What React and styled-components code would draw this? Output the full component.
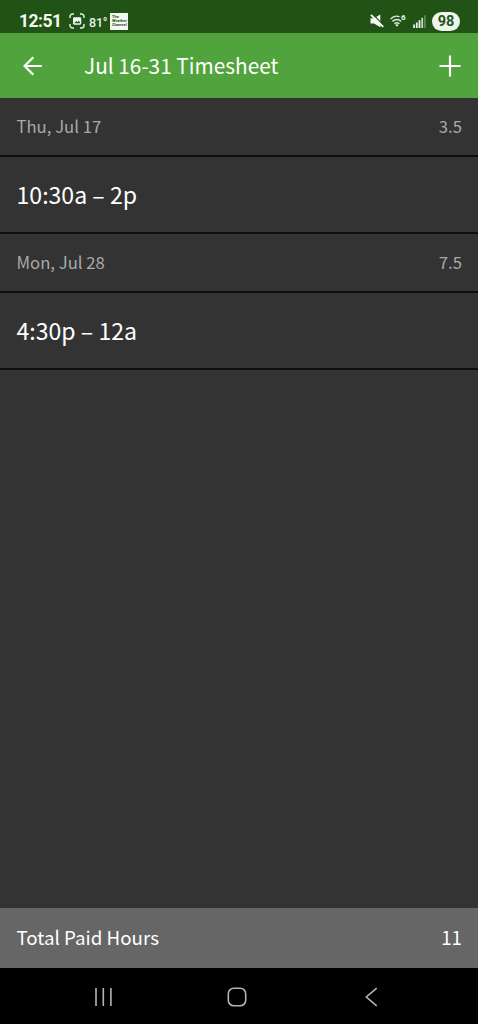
import React from "react";
import styled, { createGlobalStyle } from "styled-components";

const GlobalStyle = createGlobalStyle`
  * {
    box-sizing: border-box;
  }

  body {
    margin: 0;
    background-color: #333333;
    font-family: "Noto Sans CJK SC", "Noto Sans", sans-serif;
  }
`

const Screen = styled.div`
  display: flex;
  flex-direction: column;
  height: 100vh;
  min-height: 1024px;
  background-color: #333333;
  color: #ffffff;
`

const StatusBar = styled.div`
  display: flex;
  justify-content: space-between;
  align-items: center;
  height: 33px;
  padding: 9px 18px 0 19px;
  background-color: #215317;
  font-family: Roboto, sans-serif;
`

const StatusGroup = styled.div`
  display: flex;
  align-items: center;
  gap: ${({ $gap }) => $gap}px;
  height: 24px;
`

const Clock = styled.span`
  width: 50px;
  color: #f4faf2;
  font-size: 17.5px;
  font-weight: 700;
  letter-spacing: -0.5px;
  line-height: 24px;
`

const Temperature = styled.span`
  width: 21px;
  margin-left: 4px;
  padding-top: 2px;
  color: #e6f3e2;
  font-size: 12.5px;
  font-weight: 500;
  letter-spacing: -0.2px;
  white-space: nowrap;
`

const ChannelBadge = styled.div`
  display: flex;
  flex-direction: column;
  justify-content: center;
  width: 18px;
  height: 17px;
  padding-left: 2px;
  background-color: #f4faf2;
  color: #215317;
  font-size: 4px;
  font-weight: 700;
  line-height: 4px;
  overflow: hidden;
`

const Battery = styled.span`
  width: 28px;
  height: 19px;
  border-radius: 10px;
  background-color: #eef5ec;
  color: #215317;
  font-size: 14.5px;
  font-weight: 700;
  line-height: 19px;
  text-align: center;
`

const AppBar = styled.header`
  display: flex;
  align-items: center;
  height: 65px;
  padding: 0 17px 0 23px;
  background-color: #51a43d;
`

const Title = styled.h1`
  flex: 1;
  margin: 0 0 1px 42px;
  font-size: 20.8px;
  font-weight: 400;
  line-height: 32px;
`

const IconButton = styled.button`
  display: flex;
  padding: 0;
  border: none;
  background: none;
  color: #ffffff;
`

const EntryList = styled.main`
  flex: 1;
`

const DayRow = styled.div`
  display: flex;
  justify-content: space-between;
  align-items: center;
  height: 59px;
  padding: 0 16px 1px 16.5px;
  border-bottom: 2px solid #0e0e0e;
  color: #a9a9a9;
  font-size: 16.7px;
`

const ShiftRow = styled.div`
  display: flex;
  align-items: center;
  height: 77px;
  padding: 0 16px 2px 16.5px;
  border-bottom: 2px solid #0e0e0e;
  font-size: 23.1px;
`

const TotalBar = styled.footer`
  display: flex;
  justify-content: space-between;
  align-items: center;
  height: 60px;
  padding: 0 16px 3px 16.5px;
  background-color: #666666;
  font-size: 18.75px;
`

const NavBar = styled.nav`
  display: flex;
  justify-content: space-between;
  align-items: center;
  height: 56px;
  padding: 2px 100px 0 93px;
  background-color: #000000;
  color: #b4b4b4;
`

const HomeButton = styled.span`
  display: flex;
  margin-right: 4px;
`

const days = [
  { date: "Thu, Jul 17", hours: "3.5", shift: "10:30a – 2p" },
  { date: "Mon, Jul 28", hours: "7.5", shift: "4:30p – 12a" },
]

function CaptureIcon() {
  return (
    <svg width="16" height="16" viewBox="0 0 16 16" fill="none">
      <path
        d="M1 5V3.5A2.5 2.5 0 0 1 3.5 1H5M11 1h1.5A2.5 2.5 0 0 1 15 3.5V5M15 11v1.5a2.5 2.5 0 0 1-2.5 2.5H11M5 15H3.5A2.5 2.5 0 0 1 1 12.5V11"
        stroke="#e6f3e2"
        strokeWidth="1.4"
      />
      <rect x="4" y="4.3" width="8.2" height="7.4" rx="1.4" fill="#f4faf2" />
      <path d="M5.2 10.3 7.2 8l1.3 1.2 1.3-1.8 1.5 2.9Z" fill="#215317" />
    </svg>
  )
}

function MutedIcon() {
  return (
    <svg width="14" height="14" viewBox="0 0 14 14">
      <path d="M0.5 4.2h3.6L10.3 0.6v12.6L4.1 9.6H0.5Z" fill="#f4faf2" />
      <path d="M2.6 0.2 14 11.4" stroke="#215317" strokeWidth="1.2" />
      <path d="M1 0.9 13.2 12.9" stroke="#f4faf2" strokeWidth="2" />
    </svg>
  )
}

function WifiIcon() {
  return (
    <svg width="16" height="14" viewBox="0 0 16 14" fill="none">
      <path
        d="M0.6 5Q4.8 0.6 9.4 2.9M2.4 7.4Q6.9 3.6 11.2 7.4M4.4 9.8Q6.9 7.6 9.4 9.8"
        stroke="#d9ead5"
        strokeWidth="1.4"
      />
      <path d="M5.2 10.8 6.9 12.8 8.6 10.8Q6.9 9.7 5.2 10.8Z" fill="#f4faf2" />
      <text x="11" y="6.4" fill="#f4faf2" fontFamily="Roboto, sans-serif" fontSize="8" fontWeight="700">
        6
      </text>
    </svg>
  )
}

function SignalIcon() {
  return (
    <svg width="13" height="13" viewBox="0 0 13 13">
      <path d="M0.2 9.5h1.8V13H0.2ZM2.9 7.5h1.8V13H2.9ZM5.6 5.2h1.8V13H5.6Z" fill="#e6f3e2" />
      <path d="M8.3 2.8h1.8V13H8.3Z" fill="#c5d9c0" />
      <path d="M11 0.3h1.8V13H11Z" fill="#5d8555" />
    </svg>
  )
}

function BackIcon() {
  return (
    <svg width="19" height="20" viewBox="0 0 19 20" fill="none" stroke="currentColor" strokeWidth="2.2">
      <path d="M18.8 10H2M10.3 1.2 1.5 10l8.8 8.8" />
    </svg>
  )
}

function AddIcon() {
  return (
    <svg width="22" height="22" viewBox="0 0 22 22" stroke="currentColor" strokeWidth="2.2">
      <path d="M11 0.5v21M0.5 11h21" />
    </svg>
  )
}

function RecentsIcon() {
  return (
    <svg width="20" height="18" viewBox="0 0 20 18" stroke="currentColor" strokeWidth="1.6">
      <path d="M3 0v18M10.3 0v18M17.9 0v18" />
    </svg>
  )
}

function HomeIcon() {
  return (
    <svg width="20" height="20" viewBox="0 0 20 20" fill="none" stroke="currentColor" strokeWidth="1.6">
      <rect x="1.3" y="1.3" width="17.4" height="17.4" rx="5.5" />
    </svg>
  )
}

function ReturnIcon() {
  return (
    <svg width="14" height="20" viewBox="0 0 14 20" fill="none" stroke="currentColor" strokeWidth="1.6">
      <path d="M12.7 1.2 2.3 10l10.4 8.8" />
    </svg>
  )
}

export default function App() {
  return (
    <Screen>
      <GlobalStyle />
      <StatusBar>
        <StatusGroup $gap={0}>
          <Clock>12:51</Clock>
          <CaptureIcon />
          <Temperature>81°</Temperature>
          <ChannelBadge>
            <span>The</span>
            <span>Weather</span>
            <span>Channel</span>
          </ChannelBadge>
        </StatusGroup>
        <StatusGroup $gap={6.5}>
          <MutedIcon />
          <WifiIcon />
          <SignalIcon />
          <Battery>98</Battery>
        </StatusGroup>
      </StatusBar>
      <AppBar>
        <IconButton aria-label="Back">
          <BackIcon />
        </IconButton>
        <Title>Jul 16-31 Timesheet</Title>
        <IconButton aria-label="Add">
          <AddIcon />
        </IconButton>
      </AppBar>
      <EntryList>
        {days.map((day) => (
          <React.Fragment key={day.date}>
            <DayRow>
              <span>{day.date}</span>
              <span>{day.hours}</span>
            </DayRow>
            <ShiftRow>{day.shift}</ShiftRow>
          </React.Fragment>
        ))}
      </EntryList>
      <TotalBar>
        <span>Total Paid Hours</span>
        <span>11</span>
      </TotalBar>
      <NavBar>
        <RecentsIcon />
        <HomeButton>
          <HomeIcon />
        </HomeButton>
        <ReturnIcon />
      </NavBar>
    </Screen>
  )
}
